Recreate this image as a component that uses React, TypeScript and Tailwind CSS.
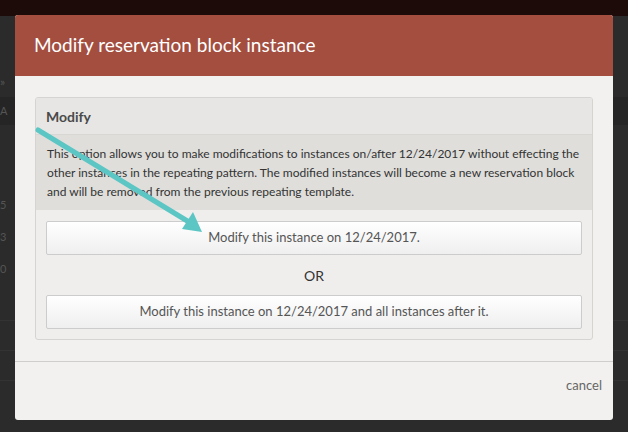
import React from "react";

function Arrow() {
  return (
    <svg
      className="pointer-events-none absolute left-0 top-0"
      width="628"
      height="432"
      viewBox="0 0 628 432"
    >
      <line
        x1="38"
        y1="130"
        x2="189"
        y2="222"
        stroke="#5cc6c4"
        strokeWidth="5"
        strokeLinecap="round"
      />
      <polygon points="202,232 182,229 193,212" fill="#5cc6c4" />
    </svg>
  );
}

function Backdrop() {
  return (
    <div className="flex h-full flex-col text-[11px] text-[#555]">
      <div className="h-[16px] bg-[#1d0b0a]" />
      <div className="flex h-[81px] items-end pb-[6px] text-[12px]">»</div>
      <div className="flex h-[28px] items-center bg-[#252525]">A</div>
      <div className="flex h-[195px] flex-col gap-[18px] pt-[73px] leading-[14px]">
        <span>5</span>
        <span>3</span>
        <span>0</span>
      </div>
      <div className="h-[30px] border-t border-[#333]" />
      <div className="h-[30px] border-t border-[#333]" />
      <div className="flex-1 border-t border-[#333]" />
    </div>
  );
}

export default function App() {
  return (
    <div
      className="relative h-[432px] w-[628px] overflow-hidden bg-[#2b2b2b]"
      style={{ fontFamily: "Lato, 'Open Sans', sans-serif" }}
    >
      <Backdrop />

      {/* modal */}
      <div className="absolute left-[15px] top-[15px] flex h-[405px] w-[598px] flex-col overflow-hidden rounded-[3px] bg-[#f2f1ef]">
        <div className="flex h-[61px] items-center bg-[#a34e3f] px-[19px]">
          <h1 className="text-[19px] text-white">Modify reservation block instance</h1>
        </div>

        <div className="px-[20px] py-[21px]">
          <div className="overflow-hidden rounded-[3px] border border-[#d6d4d0] bg-[#efeeec]">
            <div className="flex h-[37px] items-center border-b border-[#d9d7d3] bg-[#e7e6e4] px-[10px]">
              <h2 className="text-[14px] font-bold text-[#4a4a4a]">Modify</h2>
            </div>
            <div className="h-[75px] bg-[#dfdedb] px-[11px] pt-[9px] text-[12px] leading-[19px] text-[#333]">
              This option allows you to make modifications to instances on/after 12/24/2017 without effecting the
              other instances in the repeating pattern. The modified instances will become a new reservation block
              and will be removed from the previous repeating template.
            </div>
            <div className="flex flex-col px-[10px] pb-[10px] pt-[11px]">
              <button className="h-[34px] rounded-[2px] border border-[#ccc] bg-gradient-to-b from-white to-[#efefef] text-[13px] text-[#555]">
                Modify this instance on 12/24/2017.
              </button>
              <div className="flex h-[40px] items-center justify-center text-[14px] text-[#333]">OR</div>
              <button className="h-[34px] rounded-[2px] border border-[#ccc] bg-gradient-to-b from-white to-[#efefef] text-[13px] text-[#555]">
                Modify this instance on 12/24/2017 and all instances after it.
              </button>
            </div>
          </div>
        </div>

        <div className="h-px bg-[#d0cecb]" />
        <div className="flex flex-1 items-center justify-end pb-[10px] pr-[11px]">
          <span className="text-[13px] text-[#666]">cancel</span>
        </div>
      </div>

      <Arrow />
    </div>
  );
}
